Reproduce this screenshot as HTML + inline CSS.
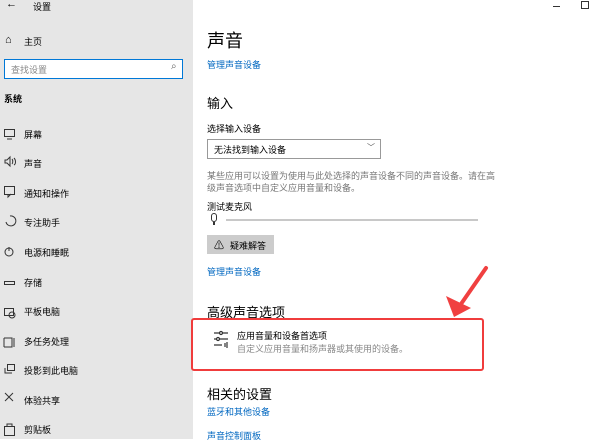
<!DOCTYPE html><html><head><meta charset="utf-8"><style>
*{margin:0;padding:0;box-sizing:border-box}
body{width:600px;height:439px;overflow:hidden;background:#fff;font-family:"Liberation Sans","Noto Sans CJK SC",sans-serif;position:relative;color:#000}
.sb{position:absolute;left:0;top:0;width:193px;height:439px;background:#e6e6e6}
.a{position:absolute;white-space:nowrap}
.s{font-size:9px;color:#000}
.lnk{font-size:9px;color:#0067c0}
</style></head><body>
<div class="sb"></div>
<div class="a" style="left:6px;top:-2px;font-size:11px">←</div>
<div class="a s" style="left:33px;top:0px">设置</div>
<div class="a" style="left:5px;top:34px;font-size:11px">⌂</div>
<div class="a s" style="left:24px;top:35px">主页</div>
<div class="a" style="left:4px;top:59px;width:179px;height:20px;border:1px solid #0078d7;background:#fff"></div>
<div class="a" style="left:11px;top:63px;font-size:9px;color:#888">查找设置</div>
<div class="a" style="left:171px;top:61px;font-size:10px;color:#666">⌕</div>
<div class="a s" style="left:4px;top:92px;font-weight:bold">系统</div>
<div class="a" style="left:0;top:128px">
<svg width="193" height="311" style="position:absolute;left:0;top:0" fill="none" stroke="#333" stroke-width="1">
<rect x="4.5" y="1.5" width="10" height="7"/><path d="M7 11h5"/>
<path d="M5 32h2l3-3v9l-3-3H5z M12 31c1 1 1 4 0 5 M14 30c2 2 2 6 0 7"/>
<rect x="4.5" y="58.5" width="10" height="8"/><path d="M8 66v3l3-3"/>
<path d="M10 88a5 5 0 1 1-4 6"/>
<circle cx="9" cy="124" r="4"/><path d="M9 119v4"/>
<rect x="4.5" y="153.5" width="10" height="3"/>
<rect x="4.5" y="180.5" width="9" height="7"/><circle cx="12" cy="187" r="3"/>
<path d="M4 210v9 M4 210h8v9H4 M14 210v9"/>
<rect x="7.5" y="236.5" width="7" height="6"/><path d="M5 240v5h7"/>
<path d="M5 265l8 8 M13 265l-8 8"/>
<rect x="4.5" y="298.5" width="10" height="9"/><path d="M7 298v-2h5v2"/>
</svg></div>
<div class="a s" style="left:24px;top:128px">屏幕</div>
<div class="a s" style="left:24px;top:157px">声音</div>
<div class="a s" style="left:24px;top:187px">通知和操作</div>
<div class="a s" style="left:24px;top:216px">专注助手</div>
<div class="a s" style="left:24px;top:246px">电源和睡眠</div>
<div class="a s" style="left:24px;top:276px">存储</div>
<div class="a s" style="left:24px;top:305px">平板电脑</div>
<div class="a s" style="left:24px;top:335px">多任务处理</div>
<div class="a s" style="left:24px;top:364px">投影到此电脑</div>
<div class="a s" style="left:24px;top:394px">体验共享</div>
<div class="a s" style="left:24px;top:423px">剪贴板</div>

<div class="a" style="left:553px;top:6px;width:7px;height:1px;background:#333"></div>
<div class="a" style="left:581px;top:1px;width:8px;height:8px;border:1px solid #333"></div>

<div class="a" style="left:207px;top:27px;font-size:18px">声音</div>
<div class="a lnk" style="left:207px;top:58px">管理声音设备</div>
<div class="a" style="left:207px;top:93px;font-size:13px">输入</div>
<div class="a s" style="left:207px;top:122px">选择输入设备</div>
<div class="a" style="left:207px;top:139px;width:174px;height:20px;border:1px solid #999;background:#fff"></div>
<div class="a s" style="left:214px;top:143px">无法找到输入设备</div>
<div class="a" style="left:367px;top:142px;font-size:8px;color:#555">﹀</div>
<div class="a" style="left:207px;top:170px;font-size:9px;color:#777;line-height:12px">某些应用可以设置为使用与此处选择的声音设备不同的声音设备。请在高<br>级声音选项中自定义应用音量和设备。</div>
<div class="a s" style="left:207px;top:200px">测试麦克风</div>
<div class="a" style="left:211px;top:213px;width:6px;height:9px;border:1px solid #333;border-radius:3px"></div>
<div class="a" style="left:213px;top:222px;width:2px;height:3px;background:#333"></div>
<div class="a" style="left:226px;top:219px;width:252px;height:2px;background:#c8c8c8"></div>
<div class="a" style="left:207px;top:235px;width:67px;height:19px;background:#ccc"></div>
<div class="a" style="left:214px;top:237px;font-size:10px">⚠</div>
<div class="a s" style="left:230px;top:239px">疑难解答</div>
<div class="a lnk" style="left:207px;top:265px">管理声音设备</div>
<div class="a" style="left:207px;top:302px;font-size:13px">高级声音选项</div>
<div class="a" style="left:191px;top:318px;width:293px;height:53px;border:2px solid #f03c3c;border-radius:3px"></div>
<svg class="a" style="left:213px;top:329px" width="20" height="20" stroke="#333" fill="none" stroke-width="1.2"><path d="M1 4h14 M1 10h14 M1 16h8"/><circle cx="8" cy="4" r="1.5" fill="#fff"/><circle cx="5" cy="10" r="1.5" fill="#fff"/><path d="M12 14v4 M14 13v6"/></svg>
<div class="a s" style="left:237px;top:329px">应用音量和设备首选项</div>
<div class="a" style="left:237px;top:342px;font-size:9px;color:#888">自定义应用音量和扬声器或其使用的设备。</div>
<svg class="a" style="left:440px;top:260px" width="60" height="70"><path d="M46 8L21 44" stroke="#f04040" stroke-width="4" stroke-linecap="round"/><path d="M14 57L6 36L31 48Z" fill="#f04040"/></svg>
<div class="a" style="left:207px;top:384px;font-size:13px">相关的设置</div>
<div class="a lnk" style="left:207px;top:405px">蓝牙和其他设备</div>
<div class="a lnk" style="left:207px;top:429px">声音控制面板</div>
</body></html>
